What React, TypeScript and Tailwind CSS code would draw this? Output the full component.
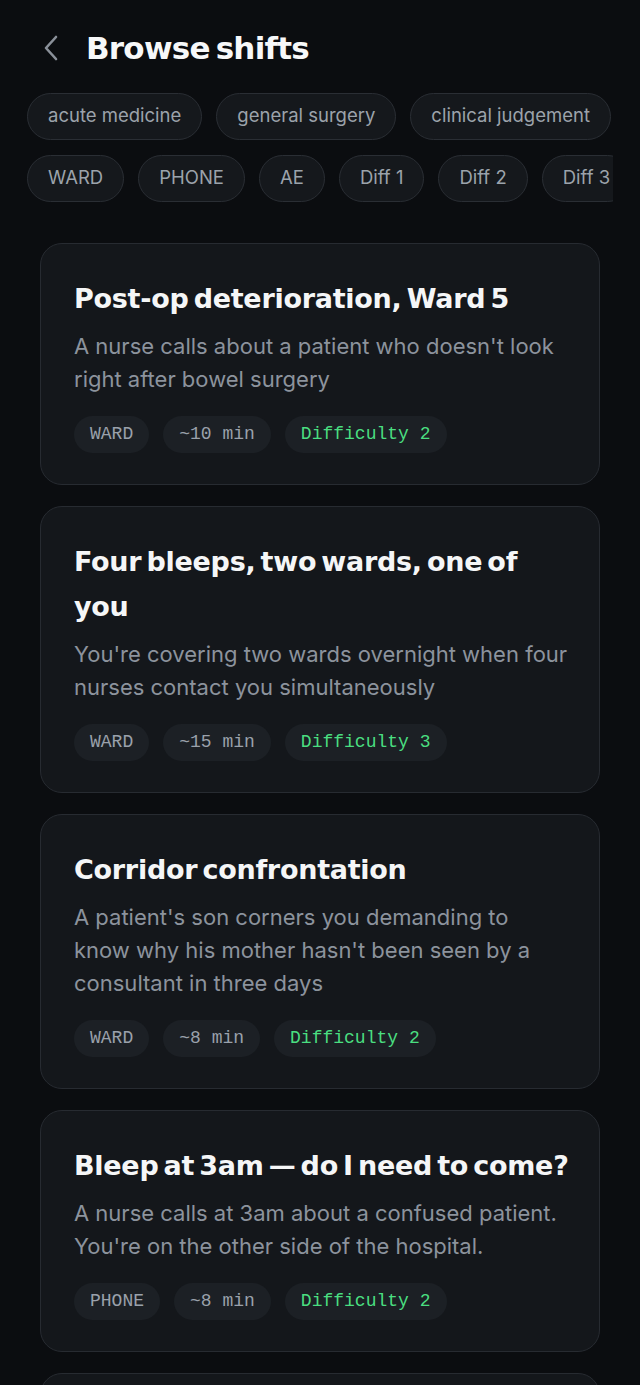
import React from "react";

type Shift = {
  title: string;
  blurb: string;
  setting: string;
  minutes: number;
  difficulty: number;
};

const topics = ["acute medicine", "general surgery", "clinical judgement", "communication"];
const filters = ["WARD", "PHONE", "AE", "Diff 1", "Diff 2", "Diff 3", "Diff 4"];

const shifts: Shift[] = [
  {
    title: "Post-op deterioration, Ward 5",
    blurb: "A nurse calls about a patient who doesn't look right after bowel surgery",
    setting: "WARD",
    minutes: 10,
    difficulty: 2,
  },
  {
    title: "Four bleeps, two wards, one of you",
    blurb: "You're covering two wards overnight when four nurses contact you simultaneously",
    setting: "WARD",
    minutes: 15,
    difficulty: 3,
  },
  {
    title: "Corridor confrontation",
    blurb: "A patient's son corners you demanding to know why his mother hasn't been seen by a consultant in three days",
    setting: "WARD",
    minutes: 8,
    difficulty: 2,
  },
  {
    title: "Bleep at 3am — do I need to come?",
    blurb: "A nurse calls at 3am about a confused patient. You're on the other side of the hospital.",
    setting: "PHONE",
    minutes: 8,
    difficulty: 2,
  },
  {
    title: "Sepsis on the unit",
    blurb: "A new admission with fever and low blood pressure is waiting to be seen",
    setting: "AE",
    minutes: 12,
    difficulty: 3,
  },
];

const sans = { fontFamily: "Inter, 'Noto Sans', sans-serif" };
const display = { fontFamily: "'DejaVu Sans', Inter, sans-serif", wordSpacing: "-4px" };
const mono = { fontFamily: "'Liberation Mono', 'DejaVu Sans Mono', monospace" };

function Chip({ label }: { label: string }) {
  return (
    <button className="shrink-0 h-[47px] px-[20px] rounded-full border border-[#2a2e34] bg-[#15181c] text-[18.5px] text-[#9ca3ab] whitespace-nowrap">
      {label}
    </button>
  );
}

function Tag({ children, green }: { children: React.ReactNode; green?: boolean }) {
  return (
    <span
      className={
        "h-[37px] px-[16px] rounded-full bg-[#1c2025] flex items-center text-[18px] " +
        (green ? "text-[#4ade80]" : "text-[#9aa1ab]")
      }
      style={mono}
    >
      {children}
    </span>
  );
}

function ShiftCard({ shift }: { shift: Shift }) {
  return (
    <div className="rounded-[22px] border border-[#272b31] bg-[#14171b] pl-[33px] pr-[30px] pt-[32px] pb-[31px]">
      <h2
        className="text-[27px] font-bold leading-[45px] tracking-[-0.01em] text-[#f5f6f7]"
        style={display}
      >
        {shift.title}
      </h2>
      <p className="mt-[9px] text-[22px] leading-[33px] text-[#8c939d]">{shift.blurb}</p>
      <div className="mt-[20px] flex gap-[14px]">
        <Tag>{shift.setting}</Tag>
        <Tag>~{shift.minutes} min</Tag>
        <Tag green>Difficulty {shift.difficulty}</Tag>
      </div>
    </div>
  );
}

export default function App() {
  return (
    <div className="min-h-screen bg-[#0b0d10] overflow-hidden" style={sans}>
      <header className="flex items-center gap-[22px] pl-[40px] pt-[25px] pb-[21px]">
        <button className="w-[24px] h-[44px] flex items-center justify-center text-[#8a9099]">
          <svg width="24" height="32" viewBox="0 0 24 32" fill="none" stroke="currentColor" strokeWidth="2.6" strokeLinecap="round" strokeLinejoin="round">
            <path d="M16 5 L6 16 L16 27" />
          </svg>
        </button>
        <h1
          className="text-[31px] font-bold tracking-[-0.025em] text-[#f7f8f9]"
          style={display}
        >
          Browse shifts
        </h1>
      </header>

      <div className="mx-[27px] overflow-hidden flex flex-col gap-[15px]">
        <div className="flex gap-[14px]">
          {topics.map((t) => (
            <Chip key={t} label={t} />
          ))}
        </div>
        <div className="flex gap-[14px]">
          {filters.map((f) => (
            <Chip key={f} label={f} />
          ))}
        </div>
      </div>

      <main className="mx-[40px] mt-[41px] flex flex-col gap-[21px] pb-10">
        {shifts.map((s) => (
          <ShiftCard key={s.title} shift={s} />
        ))}
      </main>
    </div>
  );
}
